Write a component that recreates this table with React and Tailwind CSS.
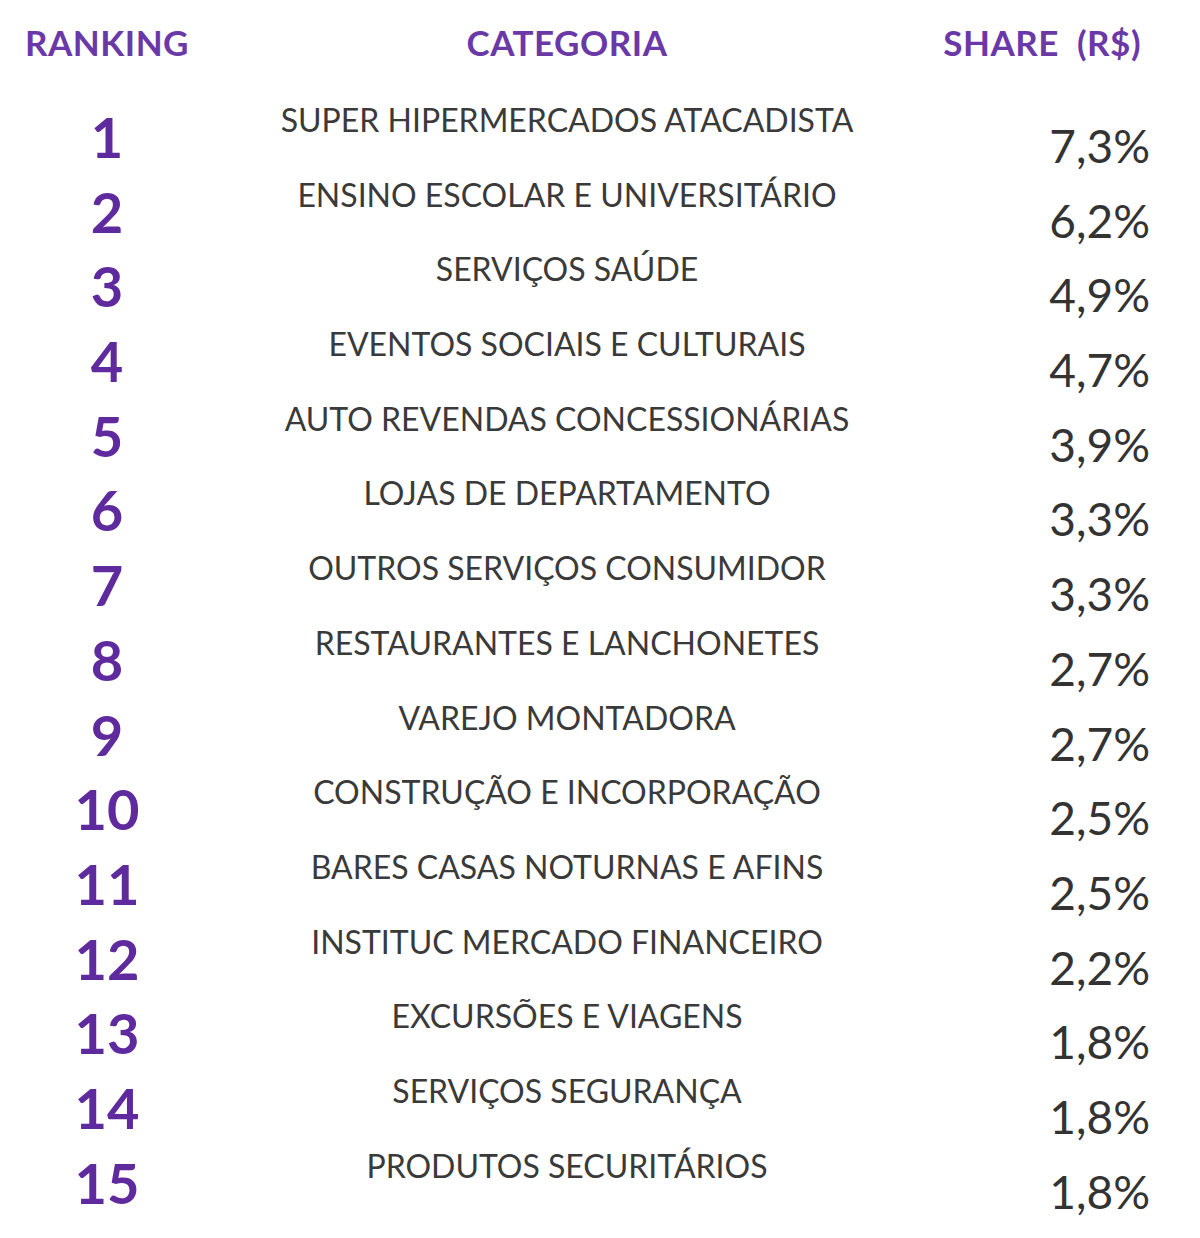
import React from 'react';

const rows = [
  ['SUPER HIPERMERCADOS ATACADISTA', '7,3%'],
  ['ENSINO ESCOLAR E UNIVERSITÁRIO', '6,2%'],
  ['SERVIÇOS SAÚDE', '4,9%'],
  ['EVENTOS SOCIAIS E CULTURAIS', '4,7%'],
  ['AUTO REVENDAS CONCESSIONÁRIAS', '3,9%'],
  ['LOJAS DE DEPARTAMENTO', '3,3%'],
  ['OUTROS SERVIÇOS CONSUMIDOR', '3,3%'],
  ['RESTAURANTES E LANCHONETES', '2,7%'],
  ['VAREJO MONTADORA', '2,7%'],
  ['CONSTRUÇÃO E INCORPORAÇÃO', '2,5%'],
  ['BARES CASAS NOTURNAS E AFINS', '2,5%'],
  ['INSTITUC MERCADO FINANCEIRO', '2,2%'],
  ['EXCURSÕES E VIAGENS', '1,8%'],
  ['SERVIÇOS SEGURANÇA', '1,8%'],
  ['PRODUTOS SECURITÁRIOS', '1,8%'],
];

export default function App() {
  return (
    <div className="w-[1200px] min-h-[1238px] bg-white font-['Lato','Liberation_Sans',sans-serif]">
      {/* header */}
      <div className="grid grid-cols-[214px_706px_1fr] pt-[22px] text-[35px] leading-[40px] font-bold tracking-[0.5px] text-[#6b38a8]">
        <div className="text-center">RANKING</div>
        <div className="text-center">CATEGORIA</div>
        <div className="text-right pr-[59px] whitespace-pre">SHARE  (R$)</div>
      </div>

      {/* rows */}
      <div className="pt-[38px]">
        {rows.map(([cat, share], i) => (
          <div key={i} className="grid grid-cols-[214px_706px_1fr] h-[74.7px] items-start">
            <div className="pt-[3px] text-center text-[56px] leading-[67px] font-bold text-[#5f2a9e]">
              {i + 1}
            </div>
            <div className="pt-[1px] text-center text-[32px] leading-[38px] text-[#3a3a3a]">
              {cat}
            </div>
            <div className="pt-[18px] text-right pr-[50px] text-[46px] leading-[55px] text-[#333333]">
              {share}
            </div>
          </div>
        ))}
      </div>
    </div>
  );
}
